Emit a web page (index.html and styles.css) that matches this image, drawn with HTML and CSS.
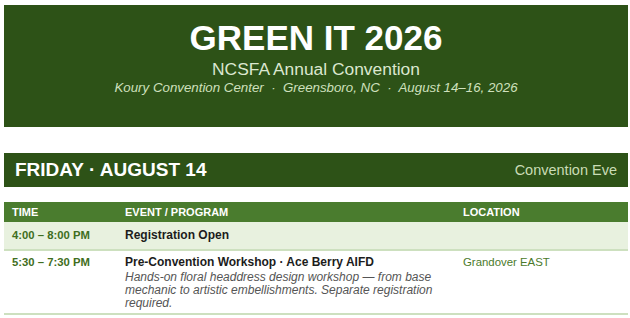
FILE: index.html
```html
<!DOCTYPE html>
<html>
<head>
<meta charset="utf-8">
<link rel="stylesheet" href="styles.css">
</head>
<body>
<div class="page">
  <header class="banner">
    <h1 class="title">GREEN IT 2026</h1>
    <div class="subtitle">NCSFA Annual Convention</div>
    <div class="meta">Koury Convention Center &nbsp;·&nbsp; Greensboro, NC &nbsp;·&nbsp; August 14–16, 2026</div>
  </header>
  <section class="day">
    <div class="day-head">
      <span class="day-name">FRIDAY · AUGUST 14</span>
      <span class="day-note">Convention Eve</span>
    </div>
    <table class="sched">
      <thead>
        <tr><th class="c-time">TIME</th><th class="c-event">EVENT / PROGRAM</th><th class="c-loc">LOCATION</th></tr>
      </thead>
      <tbody>
        <tr class="hl">
          <td class="time">4:00 – 8:00 PM</td>
          <td><div class="ev">Registration Open</div></td>
          <td class="loc"></td>
        </tr>
        <tr class="last">
          <td class="time">5:30 – 7:30 PM</td>
          <td><div class="ev">Pre-Convention Workshop · Ace Berry AIFD</div>
            <div class="desc">Hands-on floral headdress design workshop — from base mechanic to artistic embellishments. Separate registration required.</div></td>
          <td class="loc">Grandover EAST</td>
        </tr>
      </tbody>
    </table>
  </section>
</div>
</body>
</html>
```
FILE: styles.css
```css
html, body { margin: 0; padding: 0; background: #fff; }
body { font-family: "Liberation Sans", Arial, sans-serif; }
.page { padding: 5px 2px 0 4px; }
.banner {
  background: #2d5217;
  height: 122px;
  box-sizing: border-box;
  padding-top: 13px;
  text-align: center;
}
.title {
  margin: 0;
  color: #fff;
  font-size: 35px;
  line-height: 40px;
  font-weight: bold;
}
.subtitle {
  margin-top: 1px;
  color: #dbe7cf;
  font-size: 17.4px;
  line-height: 20px;
}
.meta {
  margin-top: 1px;
  color: #cfe0bd;
  font-size: 13.3px;
  line-height: 16px;
  font-style: italic;
}
.day { margin-top: 26px; }
.day-head {
  background: #2d5217;
  height: 34px;
  display: flex;
  align-items: center;
  justify-content: space-between;
  padding: 0 11px 0 11px;
}
.day-name { color: #fff; font-weight: bold; font-size: 19px; }
.day-note { color: #c9dcb5; font-size: 14.5px; }
.sched {
  margin-top: 15px;
  width: 100%;
  border-collapse: collapse;
  table-layout: fixed;
}
.c-time { width: 113px; }
.c-event { width: 338px; }
.sched th {
  background: #4a7c2e;
  color: #fff;
  font-size: 11px;
  font-weight: bold;
  text-align: left;
  padding: 3px 8px;
  height: 20px;
  box-sizing: border-box;
  line-height: 14px;
}
.sched td {
  vertical-align: top;
  padding: 6px 8px;
  border-bottom: 2px solid #cde0bf;
  font-size: 12px;
  line-height: 15px;
}
.sched tr.hl td { background: #e8f1df; }
.sched td.time { color: #3f6e22; font-weight: bold; font-size: 11.3px; }
.ev { color: #1c1c1c; font-weight: bold; }
.desc { color: #555; font-style: italic; font-size: 12px; line-height: 13px; margin-top: 1px; }
.sched td.loc { color: #4b7a2b; font-size: 11.4px; }
.sched tr.last td { padding-top: 4px; padding-bottom: 3px; }
```
